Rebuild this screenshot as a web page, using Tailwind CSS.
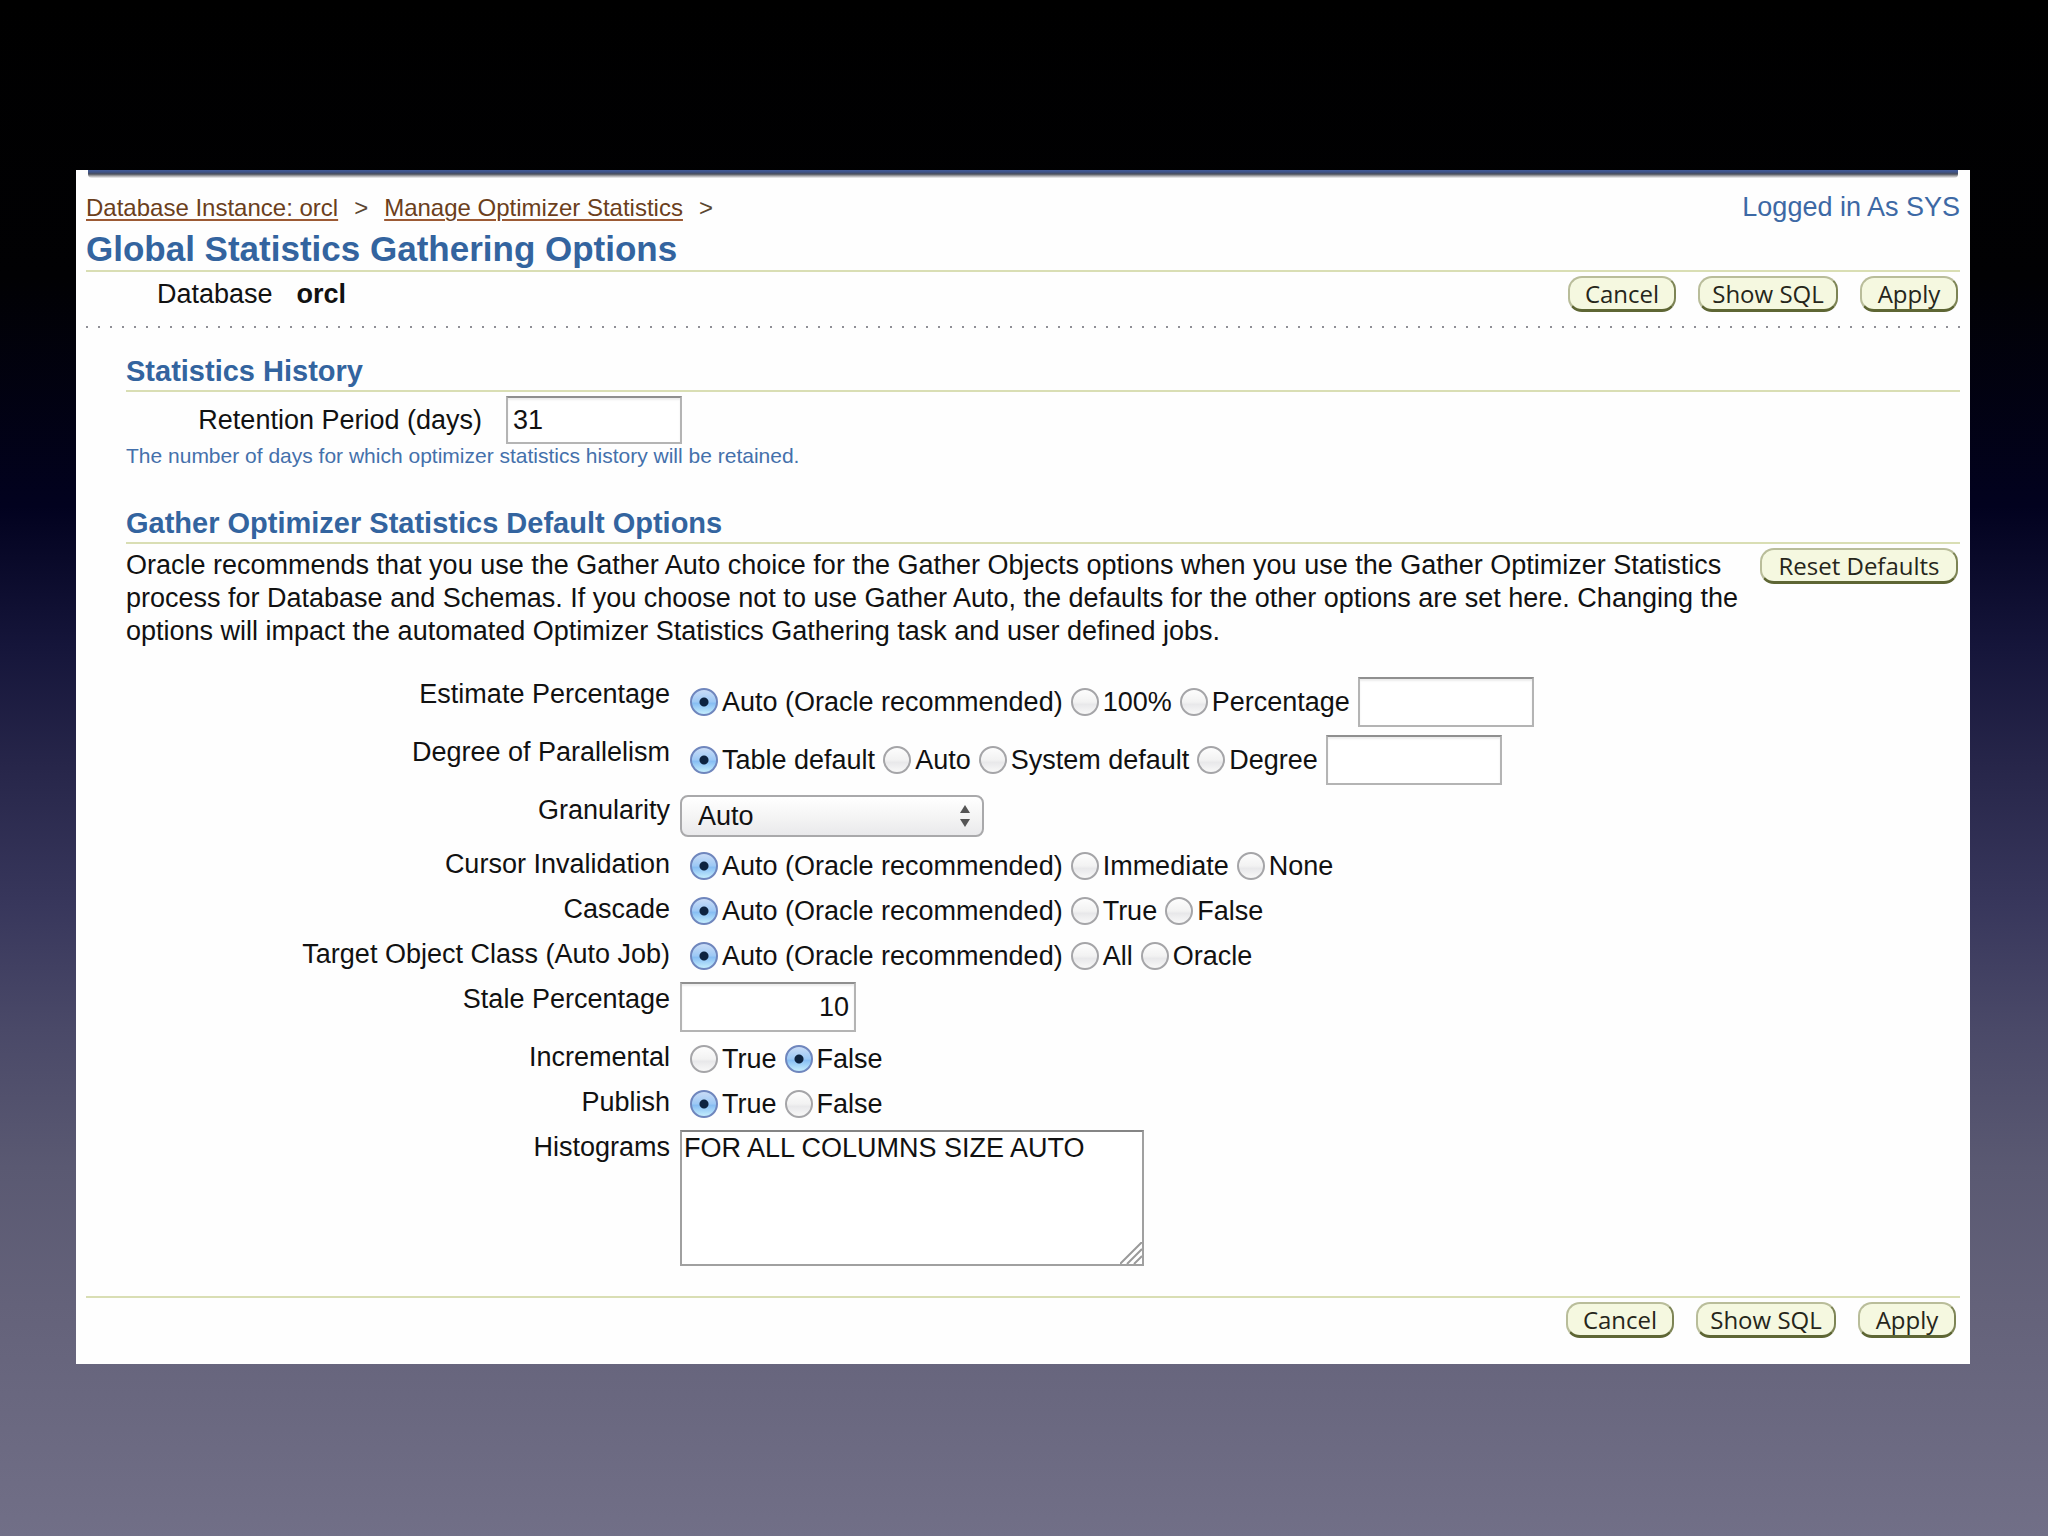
<!DOCTYPE html>
<html lang="en">
<head>
<meta charset="utf-8">
<title>Global Statistics Gathering Options</title>
<script src="https://cdn.jsdelivr.net/npm/@tailwindcss/browser@4"></script>
</head>
<body class="min-h-screen bg-[linear-gradient(180deg,#000000_0%,#010103_18%,#02021f_33%,#15153a_42%,#27264a_50%,#38375c_59%,#4a4968_67%,#5a5972_76%,#64627a_85%,#716f87_100%)] pt-[170px] pr-[78px] pb-12 pl-[76px] font-['Liberation_Sans',Arial,sans-serif] text-[27px] leading-[30px] text-[#111]">
<main class="bg-[#fefefe] px-[10px] pb-[26px]">
  <div class="ml-[2px] mr-[2px] h-2 rounded-b-sm bg-[linear-gradient(180deg,#425c9a_0px,#3f5488_2px,#4a4f5c_4px,#a9a9ab_6px,#f4f4f4_8px)]"></div>

  <header>
    <div class="flex items-baseline justify-between pt-[11px] leading-9">
      <nav aria-label="Breadcrumb" class="flex gap-4 text-2xl leading-9 text-[#6b3f1c]">
        <a href="#" class="underline decoration-[#9c5a34] decoration-2 underline-offset-3">Database Instance: orcl</a>
        <span class="text-[#5a4630]">&gt;</span>
        <a href="#" class="underline decoration-[#9c5a34] decoration-2 underline-offset-3">Manage Optimizer Statistics</a>
        <span class="text-[#5a4630]">&gt;</span>
      </nav>
      <span class="text-[#3d69a5]">Logged in As SYS</span>
    </div>
    <h1 class="border-b-2 border-[#d9deb4] pt-[3px] pb-px text-[35px] leading-10 font-bold text-[#33649f]">Global Statistics Gathering Options</h1>
    <div class="flex h-[54px] items-start justify-between pt-1 pr-[2px] pl-[71px]">
      <p class="flex h-9 items-center gap-6"><span>Database</span><b>orcl</b></p>
      <div class="flex gap-[22px]">
        <button type="submit" class="h-9 w-[108px] rounded-[14px] border-2 border-b-3 border-[#b9bd9a] border-r-[#7d8455] border-b-[#5e6634] bg-[#f5f8e0] font-['Open_Sans',sans-serif] text-2xl leading-7 text-[#26261a]">Cancel</button>
        <button type="submit" class="h-9 w-[140px] rounded-[14px] border-2 border-b-3 border-[#b9bd9a] border-r-[#7d8455] border-b-[#5e6634] bg-[#f5f8e0] font-['Open_Sans',sans-serif] text-2xl leading-7 text-[#26261a]">Show SQL</button>
        <button type="submit" class="h-9 w-[98px] rounded-[14px] border-2 border-b-3 border-[#b9bd9a] border-r-[#7d8455] border-b-[#5e6634] bg-[#f5f8e0] font-['Open_Sans',sans-serif] text-2xl leading-7 text-[#26261a]">Apply</button>
      </div>
    </div>
    <div class="h-[2px] bg-[repeating-linear-gradient(90deg,#8f8f96_0px,#8f8f96_2px,transparent_2px,transparent_12px)]"></div>
  </header>

  <section class="pt-[26px] pl-10">
    <h2 class="border-b-2 border-[#d9deb4] pb-[2px] text-[29px] leading-[34px] font-bold text-[#33649f]">Statistics History</h2>
    <div class="flex items-center gap-6 pt-1">
      <label for="retention" class="w-[356px] text-right">Retention Period (days)</label>
      <input id="retention" type="text" value="31" class="h-12 w-[176px] border-2 border-[#b4b4b4] border-t-[#8f8f8f] bg-white px-[5px] shadow-[inset_0_2px_2px_#ededed]">
    </div>
    <p class="text-[21px] leading-6 text-[#4470ab]">The number of days for which optimizer statistics history will be retained.</p>
  </section>

  <section class="pt-[38px] pl-10">
    <h2 class="border-b-2 border-[#d9deb4] pb-[2px] text-[29px] leading-[34px] font-bold text-[#33649f]">Gather Optimizer Statistics Default Options</h2>
    <div class="flex items-start justify-between gap-3 pt-1 pr-[2px]">
      <p class="pt-px leading-[33px]">Oracle recommends that you use the Gather Auto choice for the Gather Objects options when you use the Gather Optimizer Statistics process for Database and Schemas. If you choose not to use Gather Auto, the defaults for the other options are set here. Changing the options will impact the automated Optimizer Statistics Gathering task and user defined jobs.</p>
      <button type="button" class="h-9 w-[198px] shrink-0 rounded-[14px] border-2 border-b-3 border-[#b9bd9a] border-r-[#7d8455] border-b-[#5e6634] bg-[#f5f8e0] font-['Open_Sans',sans-serif] text-2xl leading-7 text-[#26261a]">Reset Defaults</button>
    </div>

    <form id="options" class="grid grid-cols-[544px_1fr] gap-x-[10px] gap-y-[6px] pt-7"></form>
  </section>

  <footer class="mt-[30px] flex justify-end gap-[22px] border-t-2 border-[#d9deb4] pt-1 pr-1">
    <button type="submit" class="h-9 w-[108px] rounded-[14px] border-2 border-b-3 border-[#b9bd9a] border-r-[#7d8455] border-b-[#5e6634] bg-[#f5f8e0] font-['Open_Sans',sans-serif] text-2xl leading-7 text-[#26261a]">Cancel</button>
    <button type="submit" class="h-9 w-[140px] rounded-[14px] border-2 border-b-3 border-[#b9bd9a] border-r-[#7d8455] border-b-[#5e6634] bg-[#f5f8e0] font-['Open_Sans',sans-serif] text-2xl leading-7 text-[#26261a]">Show SQL</button>
    <button type="submit" class="h-9 w-[98px] rounded-[14px] border-2 border-b-3 border-[#b9bd9a] border-r-[#7d8455] border-b-[#5e6634] bg-[#f5f8e0] font-['Open_Sans',sans-serif] text-2xl leading-7 text-[#26261a]">Apply</button>
  </footer>
</main>
<script>
const inputClass = 'h-[50px] w-[176px] border-2 border-[#b4b4b4] border-t-[#8f8f8f] bg-white px-[5px] shadow-[inset_0_2px_2px_#ededed]';
const radioClass = 'size-7 shrink-0 appearance-none rounded-full border-2 border-[#a5a5a8] bg-[linear-gradient(180deg,#fdfdfd_0%,#f2f2f2_50%,#e8e8ea_60%,#f8f8f8_100%)] checked:border-[#6f86bd] checked:bg-[radial-gradient(circle,#0d2340_0px,#0d2340_4px,transparent_5px),linear-gradient(180deg,#c9dcf6_0%,#9cc8f5_50%,#86bdf3_55%,#c4edfd_100%)]';
const rows = [
  { id: 'estimate', label: 'Estimate Percentage', radios: ['Auto (Oracle recommended)', '100%', 'Percentage'], on: 0, input: true },
  { id: 'degree', label: 'Degree of Parallelism', radios: ['Table default', 'Auto', 'System default', 'Degree'], on: 0, input: true },
  { id: 'granularity', label: 'Granularity', html: `<div class="flex h-12 items-center"><div class="relative">
      <select id="granularity" class="block h-[42px] w-[304px] appearance-none rounded-lg border-2 border-[#a9a9ab] bg-[linear-gradient(180deg,#ffffff_0%,#f5f5f5_50%,#e9e9eb_100%)] pl-4"><option>Auto</option></select>
      <svg class="pointer-events-none absolute top-[10px] right-[13px]" width="12" height="22" viewBox="0 0 12 22" fill="#555"><path d="M6 0 11 8H1zM6 22 1 14H11z"/></svg>
    </div></div>` },
  { id: 'cursor', label: 'Cursor Invalidation', radios: ['Auto (Oracle recommended)', 'Immediate', 'None'], on: 0 },
  { id: 'cascade', label: 'Cascade', radios: ['Auto (Oracle recommended)', 'True', 'False'], on: 0 },
  { id: 'target', label: 'Target Object Class (Auto Job)', radios: ['Auto (Oracle recommended)', 'All', 'Oracle'], on: 0 },
  { id: 'stale', label: 'Stale Percentage', html: `<div class="flex h-[52px] items-center"><input id="stale" type="text" value="10" class="${inputClass} text-right"></div>` },
  { id: 'incremental', label: 'Incremental', radios: ['True', 'False'], on: 1 },
  { id: 'publish', label: 'Publish', radios: ['True', 'False'], on: 0 },
  { id: 'histograms', label: 'Histograms', html: `<div class="relative mt-px w-[464px]">
      <textarea id="histograms" class="block h-[136px] w-full resize-none border-2 border-[#a0a0a0] border-t-[#858585] bg-white px-[2px] pt-px">FOR ALL COLUMNS SIZE AUTO</textarea>
      <svg class="pointer-events-none absolute right-[2px] bottom-[2px]" width="22" height="22" viewBox="0 0 22 22" stroke="#9a9a9a" stroke-width="2"><path d="M0 22 22 0M7 22 22 7M14 22 22 14"/></svg>
    </div>` },
];
document.getElementById('options').innerHTML = rows.map(r => {
  if (!r.radios) return `<label for="${r.id}" class="pt-[3px] text-right">${r.label}</label>${r.html}`;
  const radios = r.radios.map((t, i) => `<label class="flex items-center gap-1"><input type="radio" name="${r.id}" class="${radioClass}"${i === r.on ? ' checked' : ''}>${t}</label>`).join('');
  const input = r.input ? `<input type="text" aria-label="${r.label} value" class="${inputClass}">` : '';
  return `<span id="${r.id}-label" class="pt-[3px] text-right">${r.label}</span>
    <div role="radiogroup" aria-labelledby="${r.id}-label" class="flex items-center gap-2 pl-[10px] ${r.input ? 'h-[52px]' : 'h-[39px]'}">${radios}${input}</div>`;
}).join('');
</script>
</body>
</html>
